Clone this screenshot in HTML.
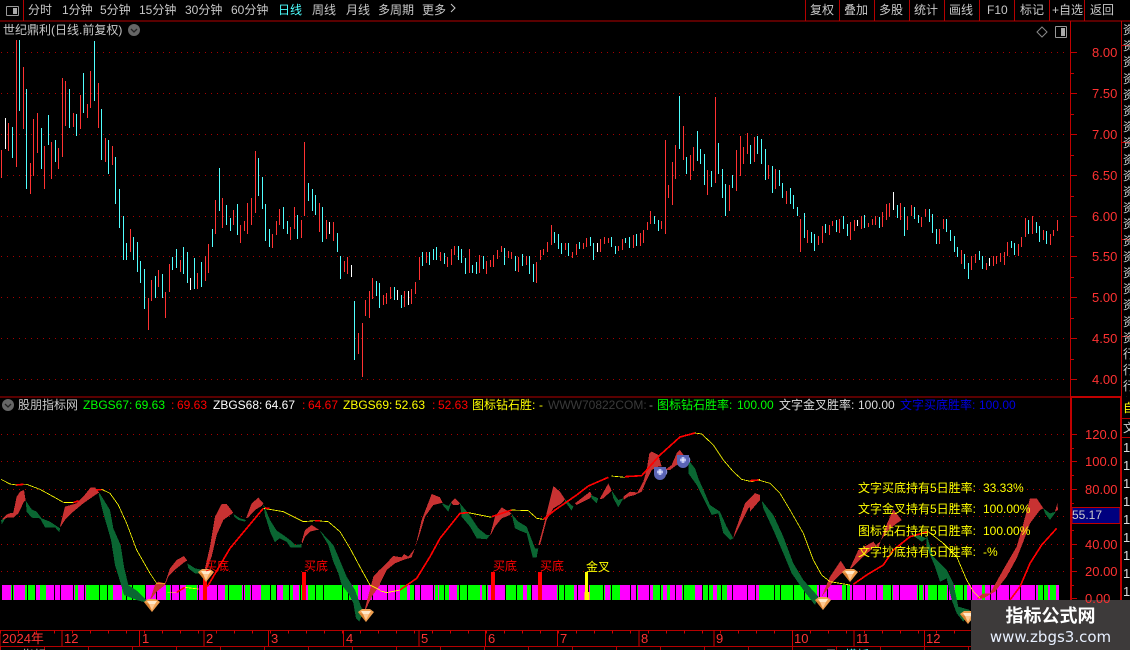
<!DOCTYPE html>
<html><head><meta charset="utf-8"><title>世纪鼎利</title>
<style>
html,body{margin:0;padding:0;background:#000}
#p{position:relative;width:1130px;height:650px;overflow:hidden;background:#000;font-family:"Liberation Sans","WenQuanYi Zen Hei","Noto Sans CJK SC",sans-serif;font-size:12px;color:#c8c8c8}
.t{position:absolute;white-space:nowrap;line-height:14px}
svg{position:absolute;left:0;top:0}
.a{color:#ff3232;font-size:13px}
.y{color:#ff0}.g{color:#0f0}.r{color:#f00}.w{color:#fff}
</style></head><body><div id="p">
<svg width="1130" height="650" viewBox="0 0 1130 650" shape-rendering="crispEdges">
<defs>
<g id="d"><polygon points="-8,-4 -4,-7 4,-7 8,-4 0,6" fill="#f0a050"/><polygon points="-5,-5 5,-5 3,-2 -3,-2" fill="#ffe8c8"/><polygon points="-3,-2 3,-2 0,4" fill="#ffc890"/><polygon points="-8,-4 -3,-2 0,6" fill="#d88030"/></g>
<g id="c" shape-rendering="auto"><path d="M5 -4a3.5 3.5 0 0 1 0 6" fill="none" stroke="#8890d8" stroke-width="1.2"/><path d="M-6 -6H6V1A6 6 0 0 1-6 1Z" fill="#5a64b4"/><circle cy="-1" r="3" fill="#9aa4e8"/><path d="M0-4V2M-3-1H3" stroke="#fff" stroke-width=".8"/></g>
</defs>
<!-- frame -->
<path d="M0 21H1130M0 397H1070M0 630.5H1070M0 646.5H1122" stroke="#b40000" fill="none"/>
<path d="M1070 397H1121" stroke="#c00000" stroke-width="2"/>
<path d="M23.5 0V21M805.5 0V21M839.5 0V21M874.5 0V21M909.5 0V21M944.5 0V21M979.5 0V21M1014.5 0V21M1049.5 0V21M1084.5 0V21" stroke="#b40000"/>
<path d="M1070.5 21V397M1121.5 21V397" stroke="#c00000"/>
<path d="M1071 397V646M1121 397V650" stroke="#c00000" stroke-width="2"/>
<path d="M1122 45.5H1130M1122 142.5H1130M1122 239.5H1130M1122 336.5H1130M1122 418.5H1130M1122 437.5H1130" stroke="#b40000"/>
<!-- dotted grid -->
<path d="M1 52.5H1066M1 93.5H1066M1 134.5H1066M1 175.5H1066M1 216.5H1066M1 256.5H1066M1 297.5H1066M1 338.5H1066M1 379.5H1066M1 434.5H1066M1 461.5H1066M1 489.5H1066M1 516.5H1066M1 544.5H1066M1 571.5H1066" stroke="#a80000" stroke-dasharray="1 5" fill="none"/>
<!-- axis ticks -->
<path d="M1070 52.5H1077M1070 93.5H1077M1070 134.5H1077M1070 175.5H1077M1070 216.5H1077M1070 256.5H1077M1070 297.5H1077M1070 338.5H1077M1070 379.5H1077M1070 434.5H1077M1070 461.5H1077M1070 489.5H1077M1070 516.5H1077M1070 544.5H1077M1070 571.5H1077M1070 598.5H1077" stroke="#c00000"/>
<path d="M1070 73.5H1074M1070 114.5H1074M1070 155.5H1074M1070 196.5H1074M1070 236.5H1074M1070 277.5H1074M1070 318.5H1074M1070 359.5H1074M1070 448.5H1074M1070 475.5H1074M1070 503.5H1074M1070 530.5H1074M1070 558.5H1074M1070 585.5H1074" stroke="#c00000"/>
<!-- candles -->
<g transform="translate(.5 0)" fill="none" stroke-width="1">
<path stroke="#ff3232" d="M1 150V178M8 123V151M16 40V167M23 67V129M30 163V194M33 119V176M37 113V153M44 146V189M51 142V179M58 148V169M62 78V157M65 81V126M73 113V127M80 95V129M87 104V118M90 71V108M98 83V128M105 138V162M112 146V165M130 229V252M148 298V330M151 280V301M158 270V287M165 292V318M169 264V292M180 260V272M197 273V289M205 256V281M208 244V273M215 200V234M222 198V228M233 210V225M240 225V243M244 221V231M247 203V234M251 198V225M255 151V213M272 234V248M276 221V235M279 209V225M290 227V240M294 207V229M301 220V238M304 142V216M319 203V232M326 220V239M333 222V241M344 261V272M347 257V274M358 333V354M362 323V377M365 300V316M369 291V318M372 278V299M383 295V305M386 293V304M390 287V299M404 291V307M411 289V304M415 282V294M419 257V280M426 252V263M440 252V261M447 257V267M451 249V265M454 246V255M469 249V273M479 255V273M486 261V274M490 260V267M493 255V267M497 250V259M501 246V252M508 251V258M511 252V259M518 257V272M526 256V265M536 262V283M540 250V260M543 249V255M547 242V252M551 225V245M565 243V250M572 252V258M576 244V255M583 243V249M586 238V247M600 239V252M604 237V244M608 238V243M618 246V251M622 239V250M633 235V248M640 233V246M643 230V243M647 222V230M650 211V224M661 221V229M665 140V234M668 185V198M672 162V205M675 145V179M683 126V160M690 155V180M693 147V171M707 170V195M715 97V183M729 185V211M736 150V191M740 136V176M743 147V164M747 133V154M754 137V162M768 165V179M775 169V189M786 191V204M800 219V252M807 230V243M818 236V245M822 226V243M829 225V235M832 221V226M839 219V233M850 222V240M854 220V231M861 216V229M868 223V227M872 219V225M875 216V225M882 212V227M886 204V220M889 203V217M900 203V220M907 216V230M911 205V216M921 217V227M925 209V217M939 229V244M943 219V229M961 250V264M971 256V270M975 254V263M986 263V270M993 256V266M996 256V264M1000 253V262M1004 252V265M1007 242V256M1018 244V256M1021 237V247M1025 218V237M1032 216V234M1043 230V240M1050 234V245M1053 230V236M1057 220V231"/>
<path stroke="#50ffff" d="M12 127V158M19 40V111M26 89V189M41 128V169M48 115V145M55 140V162M69 89V128M76 114V136M83 73V113M94 41V101M101 109V160M108 140V174M115 157V204M119 189V228M123 216V260M126 243V260M133 237V260M137 242V272M140 261V283M144 269V309M155 276V298M162 274V298M172 257V270M176 249V268M183 247V274M187 252V283M194 258V289M201 262V287M212 229V247M219 168V211M226 205V225M230 218V231M237 204V235M258 158V196M262 177V209M265 204V241M269 229V247M283 207V229M287 221V234M297 215V239M308 183V201M312 189V211M315 195V215M322 207V242M337 233V252M340 256V279M354 301V360M376 281V296M379 283V308M394 287V300M401 295V308M422 252V266M429 252V265M433 249V260M436 247V260M444 253V264M458 246V260M461 249V263M465 258V274M472 265V273M476 262V274M483 256V269M504 248V265M515 256V271M522 254V266M529 256V274M533 264V282M554 232V243M558 234V249M561 243V254M568 243V256M579 242V249M590 237V246M593 243V260M611 237V247M615 246V254M625 238V243M629 237V248M636 234V246M654 216V224M658 220V231M679 96V149M686 157V174M697 131V161M700 149V164M704 154V185M711 171V187M718 143V174M722 169V198M725 184V216M732 175V188M750 145V164M757 136V154M761 139V164M765 149V180M772 166V193M779 170V186M782 183V198M790 188V204M793 195V209M797 207V216M804 213V238M811 232V243M814 234V251M825 224V233M836 220V232M843 216V229M847 224V236M864 215V228M879 217V228M897 205V218M904 207V236M914 207V219M918 215V223M929 209V222M932 214V233M936 229V244M946 219V232M950 230V241M954 236V252M957 247V257M964 254V269M968 263V279M979 251V260M982 256V269M1011 241V248M1014 243V255M1028 220V234M1036 222V233M1039 226V242M1046 231V244"/>
<path stroke="#fff" d="M5 118V149M190 278V290M329 222V234M351 265V277M397 290V300M408 291V305M597 243V252M857 220V226M893 192V210M989 258V266"/>
</g>
<!-- indicator stripe -->
<path fill="none" stroke-width="15" stroke="#f0f" d="M1 592.5H1059"/>
<path fill="none" stroke-width="15" stroke="#0f0" d="M11 592.5H14M25 592.5H35M40 592.5H46M75 592.5H78M86 592.5H113M122 592.5H146M166 592.5H170M186 592.5H197M225 592.5H242M245 592.5H250M261 592.5H277M283 592.5H293M299 592.5H302M308 592.5H351M353 592.5H358M400 592.5H407M410 592.5H415M435 592.5H438M439 592.5H449M457 592.5H480M482 592.5H488M505 592.5H523M527 592.5H531M557 592.5H574M590 592.5H605M610 592.5H620M636 592.5H638M653 592.5H663M667 592.5H670M682 592.5H695M703 592.5H713M717 592.5H727M759 592.5H817M842 592.5H850M883 592.5H893M917 592.5H923M928 592.5H947M955 592.5H967M982 592.5H985M1038 592.5H1048M1050 592.5H1056"/>
<path fill="none" stroke-width="15" stroke="#000" stroke-dasharray="1 10 1 14 1 7 1 18 1 5 1 12" d="M1 592.5H1060"/>
<!-- oscillator bands -->
<g transform="translate(0 470) scale(.33333)">
<g fill="#c83232">
<polygon points="5,150 18,135 28,130 40,128 50,80 60,65 72,60 77,92 72,95 55,130 40,143 22,143 12,148 5,163"/>
<polygon points="180,170 195,110 230,100 250,80 272,52 285,52 298,68 290,72 250,100 220,125 195,150 182,170"/>
<polygon points="450,390 465,345 475,335 495,340 510,295 530,270 552,258 562,272 555,275 530,295 505,320 495,345 470,365 455,385"/>
<polygon points="615,295 630,230 645,140 665,102 680,102 700,128 695,132 670,150 650,195 635,260 620,300"/>
<polygon points="738,145 755,100 775,83 790,100 785,108 765,120 745,142"/>
<polygon points="905,215 915,180 935,165 958,180 950,180 930,185 915,200 907,220"/>
<polygon points="1095,415 1120,320 1140,298 1140,345 1115,380 1097,420"/>
</g>
<g fill="#0a6632">
<polygon points="3,150 15,147 5,163"/>
<polygon points="77,92 95,118 110,125 125,145 150,155 180,175 178,187 165,172 135,172 120,145 95,143 80,125"/>
<polygon points="298,68 330,120 340,175 362,225 372,290 385,345 410,362 445,395 435,397 410,390 372,375 362,340 345,285 333,210 310,130 296,72"/>
<polygon points="562,280 585,295 610,300 605,312 585,310 565,295"/>
<polygon points="700,132 720,145 738,150 735,155 715,150 703,140"/>
<polygon points="790,102 810,150 830,182 850,195 870,210 885,225 905,222 905,233 885,232 872,233 860,215 838,205 825,217 812,190 795,135"/>
<polygon points="958,180 1000,225 1015,260 1040,320 1065,360 1085,415 1095,420 1090,425 1078,455 1068,445 1060,400 1045,370 1025,345 1015,310 1000,275 985,225"/>
</g>
<path fill="none" stroke="#ff0" stroke-width="2.4" d="M3 28L30 42L50 45M70 43L80 43L120 58L160 80L190 97L220 98M300 58L305 58L330 70L355 105L380 160L410 240L430 275L450 310L470 340L495 340M503 367L530 367M555 352L595 357M790 115L850 125L910 155L945 152M960 153L985 155L1020 185L1050 235L1085 300L1110 345L1140 360"/>
<path fill="none" stroke="#f00" stroke-width="5" d="M50 45L70 43M220 98L236 92M290 60L305 59M530 367L555 352M622 350L690 235L790 115M795 114L808 115M945 152L960 152"/>
</g>
<g transform="translate(380 470) scale(.33333)">
<g fill="#c83232">
<polygon points="0,300 40,258 65,262 72,252 85,260 105,235 125,150 155,72 180,82 188,98 180,100 160,105 135,140 120,190 95,262 70,270 45,280 20,300 0,340"/>
<polygon points="212,98 225,85 240,100 235,105 220,105"/>
<polygon points="332,190 345,140 365,112 395,130 390,135 365,145 345,170 332,195"/>
<polygon points="475,225 490,170 520,48 540,65 555,88 545,100 520,115 500,150 480,225"/>
<polygon points="585,100 630,65 635,75 630,85 590,105"/>
<polygon points="660,85 685,40 695,62 670,85 660,88"/>
<polygon points="730,80 750,65 775,68 765,75 745,80 730,90"/>
<polygon points="770,72 790,35 800,0 808,-50 815,-55 835,-45 845,-10 835,-10 815,0 800,30 785,65"/>
<polygon points="855,0 875,-15 890,-50 900,-60 925,-25 915,-22 890,-15 870,0"/>
<polygon points="1065,185 1095,100 1125,70 1140,75 1140,90 1105,115 1085,155 1060,205"/>
</g>
<g fill="#0a6632">
<polygon points="188,100 205,108 215,95 205,125 188,105"/>
<polygon points="240,100 265,130 295,175 320,195 330,195 320,208 290,205 270,170 245,140"/>
<polygon points="395,132 415,155 440,170 465,235 475,235 470,262 458,262 440,190 420,182 405,175"/>
<polygon points="555,88 580,110 575,122 555,95"/>
<polygon points="632,75 655,85 650,100 635,85"/>
<polygon points="695,62 715,90 730,85 715,112 700,85"/>
<polygon points="925,-30 945,-5 955,25 975,70 990,105 1020,125 1040,170 1060,205 1050,210 1030,190 1015,130 995,135 970,85 950,45 925,10"/>
</g>
<path fill="none" stroke="#ff0" stroke-width="2.4" d="M0 362L20 368L60 360M265 128L335 142M395 120L445 122L470 145L490 148M695 18L735 22M945 -111L965 -108L1000 -75L1030 -30L1060 5L1085 28L1115 35L1140 28"/>
<path fill="none" stroke="#f00" stroke-width="5" d="M60 360L110 325L150 260L180 205L240 130L265 128M335 140L395 120M490 148L525 120L590 75L625 48L685 22M735 20L785 17L840 -45L900 -99L945 -111"/>
</g>
<g transform="translate(750 470) scale(.33333)">
<g fill="#c83232">
<polygon points="0,95 15,68 30,90 0,125"/>
<polygon points="215,380 240,320 272,272 290,300 275,310 250,335 215,380"/>
<polygon points="300,295 325,240 370,215 385,235 405,175 430,118 455,150 440,160 415,180 390,215 340,260 305,295"/>
<polygon points="680,385 700,370 720,370 765,290 800,230 815,180 840,85 860,85 880,115 870,120 840,160 820,215 800,265 770,320 735,365 700,385"/>
<polygon points="915,125 922,100 924,120"/>
</g>
<g fill="#0a6632">
<polygon points="35,92 70,135 100,200 130,280 160,330 205,380 195,405 160,360 125,310 100,250 70,180 40,115"/>
<polygon points="455,150 480,190 505,195 530,205 515,215 480,190"/>
<polygon points="530,195 550,260 590,300 610,340 625,410 660,420 640,455 620,430 605,390 590,325 570,335 555,290 530,230"/>
<polygon points="880,115 900,130 918,125 900,150 885,130"/>
</g>
<path fill="none" stroke="#ff0" stroke-width="2.4" d="M25 30L60 40L90 70L120 120L160 190L190 270L215 315L240 335L300 345M535 185L580 220L620 260L650 330L670 365L690 385"/>
<path fill="none" stroke="#f00" stroke-width="5" d="M0 32L25 30M310 343L350 315L400 285L430 240L480 200L535 185M780 390L810 350L840 280L875 225L920 175"/>
</g>
<!-- signal bars -->
<path d="M205 572V600M304 572V600M493 572V600M540 572V600" stroke="#f00" stroke-width="4" fill="none"/>
<path d="M586.5 572V592" stroke="#ff0" stroke-width="3" fill="none"/>
<path d="M587 592V600" stroke="#ff0" stroke-width="5" fill="none"/>
<g shape-rendering="auto">
<use href="#d" x="152" y="606"/><use href="#d" x="206" y="576"/><use href="#d" x="366" y="616"/><use href="#d" x="823" y="604"/><use href="#d" x="850" y="576"/><use href="#d" x="968" y="618"/>
<use href="#c" x="660" y="473"/><use href="#c" x="683" y="461"/>
</g>
<!-- bottom ticks -->
<path d="M0 630V646M62 630V646M139.500 630V646M204 630V646M268.500 630V646M343.500 630V646M419 630V646M485.500 630V646M557.500 630V646M639 630V646M714 630V646M792.500 630V646M854 630V646M924.500 630V646" stroke="#d00000"/>
<path d="M0 632H1070" stroke="#d00000" stroke-width="3" stroke-dasharray="1 17" fill="none"/>
<path d="M0 648.500H1070" stroke="#b40000" stroke-width="3" stroke-dasharray="1 43" fill="none"/>
<!-- icons -->
<rect x="6.500" y="6.500" width="12" height="9" rx="1" fill="none" stroke="#999"/><rect x="13" y="8" width="4" height="6" fill="#aaa"/>
<rect x="1055.500" y="26.500" width="11" height="11" rx="1" fill="none" stroke="#999"/><rect x="1061" y="28" width="4" height="8" fill="#aaa"/>
<g shape-rendering="auto">
<path d="M1042 27L1047 32L1042 37L1037 32Z" fill="none" stroke="#888"/>
<circle cx="134" cy="30" r="6" fill="#666"/><path d="M131 29l3 3 3-3" fill="none" stroke="#222" stroke-width="1.300"/>
<circle cx="8" cy="405" r="6" fill="#666"/><path d="M5 404l3 3 3-3" fill="none" stroke="#222" stroke-width="1.300"/>
<path d="M451 4l4 4-4 4" fill="none" stroke="#c8c8c8"/>
</g>
<rect x="1072" y="507.500" width="48" height="16" fill="#00007f" stroke="#c00000"/>
<rect x="971" y="600" width="159" height="50" fill="#3d3a3a"/>
</svg>

<span class="t" style="left:28px;top:3px">分时</span>
<span class="t" style="left:62px;top:3px">1分钟</span>
<span class="t" style="left:100px;top:3px">5分钟</span>
<span class="t" style="left:139px;top:3px">15分钟</span>
<span class="t" style="left:185px;top:3px">30分钟</span>
<span class="t" style="left:231px;top:3px">60分钟</span>
<span class="t" style="left:278px;top:3px;color:#4dffff">日线</span>
<span class="t" style="left:312px;top:3px">周线</span>
<span class="t" style="left:346px;top:3px">月线</span>
<span class="t" style="left:378px;top:3px">多周期</span>
<span class="t" style="left:422px;top:3px">更多</span>
<span class="t" style="left:810px;top:3px">复权</span>
<span class="t" style="left:844px;top:3px">叠加</span>
<span class="t" style="left:879px;top:3px">多股</span>
<span class="t" style="left:914px;top:3px">统计</span>
<span class="t" style="left:949px;top:3px">画线</span>
<span class="t" style="left:987px;top:3px">F10</span>
<span class="t" style="left:1020px;top:3px">标记</span>
<span class="t" style="left:1052px;top:3px">+自选</span>
<span class="t" style="left:1090px;top:3px">返回</span>
<span class="t" style="left:3px;top:23px">世纪鼎利(日线.前复权)</span>

<span class="t a" style="left:1092px;top:46px">8.00</span>
<span class="t a" style="left:1092px;top:87px">7.50</span>
<span class="t a" style="left:1092px;top:128px">7.00</span>
<span class="t a" style="left:1092px;top:169px">6.50</span>
<span class="t a" style="left:1092px;top:210px">6.00</span>
<span class="t a" style="left:1092px;top:250px">5.50</span>
<span class="t a" style="left:1092px;top:291px">5.00</span>
<span class="t a" style="left:1092px;top:332px">4.50</span>
<span class="t a" style="left:1092px;top:373px">4.00</span>
<span class="t a" style="left:1085px;top:428px">120.0</span>
<span class="t a" style="left:1085px;top:455px">100.0</span>
<span class="t a" style="left:1085px;top:483px">80.00</span>
<span class="t a" style="left:1085px;top:538px">40.00</span>
<span class="t a" style="left:1085px;top:565px">20.00</span>
<span class="t a" style="left:1085px;top:592px">0.00</span>
<span class="t" style="left:1072px;top:508px;color:#ccc">55.17</span>

<span class="t" style="left:18px;top:398px">股朋指标网</span>
<span class="t g" style="left:83px;top:398px">ZBGS67:</span>
<span class="t g" style="left:135px;top:398px">69.63</span>
<span class="t r" style="left:171px;top:398px">:</span>
<span class="t r" style="left:177px;top:398px">69.63</span>
<span class="t w" style="left:213px;top:398px">ZBGS68:</span>
<span class="t w" style="left:265px;top:398px">64.67</span>
<span class="t r" style="left:302px;top:398px">:</span>
<span class="t r" style="left:308px;top:398px">64.67</span>
<span class="t y" style="left:343px;top:398px">ZBGS69:</span>
<span class="t y" style="left:395px;top:398px">52.63</span>
<span class="t r" style="left:432px;top:398px">:</span>
<span class="t r" style="left:438px;top:398px">52.63</span>
<span class="t y" style="left:472px;top:398px">图标钻石胜:</span>
<span class="t y" style="left:539px;top:398px">-</span>
<span class="t" style="left:548px;top:398px;color:#3a3a3a">WWW70822COM:</span>
<span class="t" style="left:649px;top:398px;color:#888">-</span>
<span class="t g" style="left:657px;top:398px">图标钻石胜率:</span>
<span class="t g" style="left:737px;top:398px">100.00</span>
<span class="t" style="left:779px;top:398px;color:#ddd">文字金叉胜率:</span>
<span class="t" style="left:858px;top:398px;color:#ddd">100.00</span>
<span class="t" style="left:900px;top:398px;color:#0000e6">文字买底胜率:</span>
<span class="t" style="left:979px;top:398px;color:#0000e6">100.00</span>

<span class="t y" style="left:858px;top:481px">文字买底持有5日胜率:</span><span class="t y" style="left:983px;top:481px">33.33%</span>
<span class="t y" style="left:858px;top:502px">文字金叉持有5日胜率:</span><span class="t y" style="left:983px;top:502px">100.00%</span>
<span class="t y" style="left:858px;top:524px">图标钻石持有5日胜率:</span><span class="t y" style="left:983px;top:524px">100.00%</span>
<span class="t y" style="left:858px;top:545px">文字抄底持有5日胜率:</span><span class="t y" style="left:983px;top:545px">-%</span>

<span class="t r" style="left:205px;top:559px">买底</span>
<span class="t r" style="left:304px;top:559px">买底</span>
<span class="t r" style="left:493px;top:559px">买底</span>
<span class="t r" style="left:540px;top:559px">买底</span>
<span class="t y" style="left:586px;top:560px">金叉</span>

<span class="t a" style="left:2px;top:632px">2024年</span>
<span class="t a" style="left:64px;top:632px">12</span>
<span class="t a" style="left:142px;top:632px">1</span>
<span class="t a" style="left:206px;top:632px">2</span>
<span class="t a" style="left:271px;top:632px">3</span>
<span class="t a" style="left:346px;top:632px">4</span>
<span class="t a" style="left:421px;top:632px">5</span>
<span class="t a" style="left:488px;top:632px">6</span>
<span class="t a" style="left:560px;top:632px">7</span>
<span class="t a" style="left:641px;top:632px">8</span>
<span class="t a" style="left:716px;top:632px">9</span>
<span class="t a" style="left:794px;top:632px">10</span>
<span class="t a" style="left:856px;top:632px">11</span>
<span class="t a" style="left:926px;top:632px">12</span>

<!-- clipped bottom row -->
<div style="position:absolute;left:0;top:647px;width:971px;height:3px;overflow:hidden">
<span class="t" style="left:22px;top:1px">指标</span>
<span class="t" style="left:825px;top:1px">日</span><span class="t" style="left:845px;top:1px;color:#4dffff">模板</span>
</div>

<!-- clipped sidebar -->
<div style="position:absolute;left:1123px;top:22px;width:7px;height:375px;overflow:hidden;font-size:12px;line-height:16.200px;color:#ccc;white-space:pre">资
资
资
资
资
资
资
资
资
资
资
资
资
资
资
资
资
资
资
资
行
行
行
行</div>
<div style="position:absolute;left:1123px;top:400px;width:7px;height:18px;overflow:hidden;color:#ff0;line-height:16px">自</div>
<div style="position:absolute;left:1123px;top:420px;width:7px;height:17px;overflow:hidden;color:#ccc;line-height:16px">文</div>
<div style="position:absolute;left:1123px;top:439px;width:7px;height:161px;overflow:hidden;color:#ddd;line-height:18px;white-space:pre;font-size:13px">1
1
1
1
1
1
1
1
1</div>

<span class="t" style="left:971px;top:604px;width:159px;text-align:center;color:#fff;font-size:18px;line-height:22px;font-weight:bold;font-family:'Noto Sans CJK SC',sans-serif">指标公式网</span>
<span class="t" style="left:971px;top:628px;width:159px;text-align:center;color:#e8f0ff;font-size:15px;line-height:18px;font-family:'DejaVu Sans',sans-serif">www.zbgs3.com</span>
</div></body></html>
